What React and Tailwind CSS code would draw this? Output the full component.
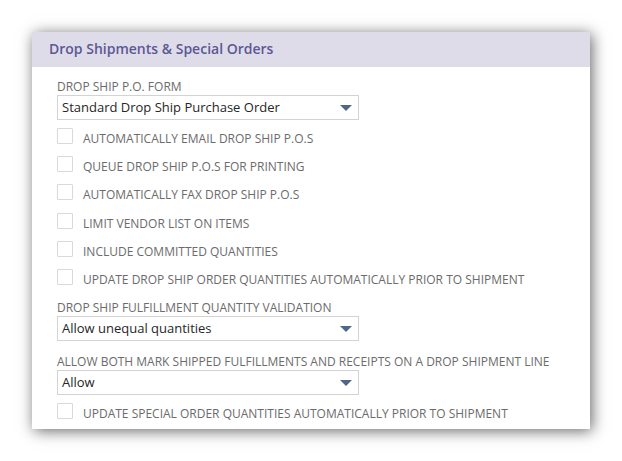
import React from "react";

const font = { fontFamily: '"Open Sans", "Noto Sans", Arial, sans-serif' };

function Select({ value }) {
  return (
    <div className="flex h-[25px] w-[302px] items-center justify-between border border-[#d3d3d3] bg-white pl-[4px] pr-[6px]">
      <span className="text-[13px] leading-none text-[#262626]">{value}</span>
      <svg width="12" height="6" viewBox="0 0 12 6" className="mt-[1px]">
        <polygon points="0,0 12,0 6,6" fill="#4e6788" />
      </svg>
    </div>
  );
}

function Label({ children, className = "" }) {
  return (
    <div className={`text-[12px] leading-[17px] text-[#6b6b6b] ${className}`}>{children}</div>
  );
}

function Check({ children }) {
  return (
    <div className="flex h-[28.33px] items-center">
      <div className="mb-[6px] h-[16px] w-[16px] shrink-0 rounded-[1px] border border-[#d9d9d9] bg-white" />
      <span className="ml-[10px] text-[12px] leading-[16px] text-[#6b6b6b]">{children}</span>
    </div>
  );
}

export default function App() {
  return (
    <div className="h-[461px] w-[622px] bg-white pl-[32px] pt-[32px]" style={font}>
      <div className="h-[397px] w-[558px] bg-white shadow-[2px_2px_14px_rgba(0,0,0,0.6)]">
        <div className="flex h-[35px] items-center bg-[#dfdce9] pb-[2px] pl-[17px]">
          <span className="text-[14px] font-semibold leading-none text-[#5b5894]">
            Drop Shipments &amp; Special Orders
          </span>
        </div>
        <div className="pl-[25px] pt-[11px]">
          <Label>DROP SHIP P.O. FORM</Label>
          <Select value="Standard Drop Ship Purchase Order" />
          <div className="mt-[4.5px]">
            <Check>AUTOMATICALLY EMAIL DROP SHIP P.O.S</Check>
            <Check>QUEUE DROP SHIP P.O.S FOR PRINTING</Check>
            <Check>AUTOMATICALLY FAX DROP SHIP P.O.S</Check>
            <Check>LIMIT VENDOR LIST ON ITEMS</Check>
            <Check>INCLUDE COMMITTED QUANTITIES</Check>
            <Check>UPDATE DROP SHIP ORDER QUANTITIES AUTOMATICALLY PRIOR TO SHIPMENT</Check>
          </div>
          <Label className="mt-[4.5px]">DROP SHIP FULFILLMENT QUANTITY VALIDATION</Label>
          <Select value="Allow unequal quantities" />
          <Label className="mt-[12.5px]">
            ALLOW BOTH MARK SHIPPED FULFILLMENTS AND RECEIPTS ON A DROP SHIPMENT LINE
          </Label>
          <Select value="Allow" />
          <div className="mt-[4.5px]">
            <Check>UPDATE SPECIAL ORDER QUANTITIES AUTOMATICALLY PRIOR TO SHIPMENT</Check>
          </div>
        </div>
      </div>
    </div>
  );
}
